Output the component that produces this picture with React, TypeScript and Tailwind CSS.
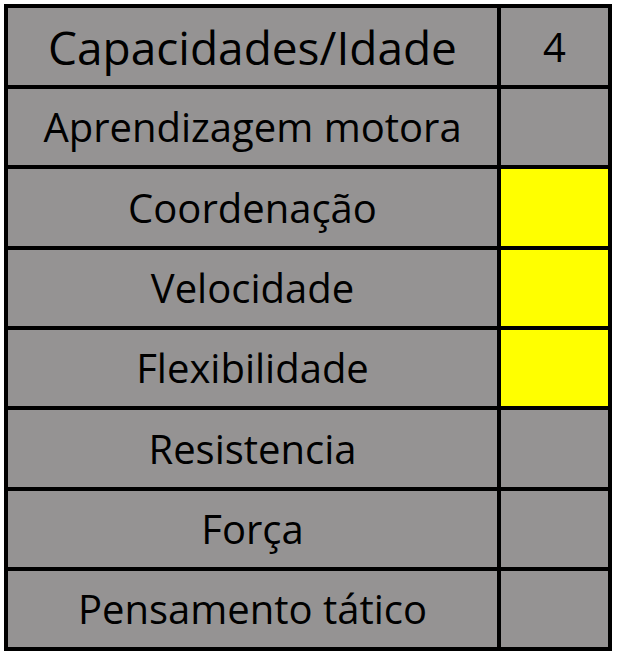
import React from 'react';

const rows = [
  { label: 'Capacidades/Idade', value: '4', h: 'h-[81px]', big: true, yellow: false },
  { label: 'Aprendizagem motora', value: '', h: 'h-[80px]', big: false, yellow: false },
  { label: 'Coordenação', value: '', h: 'h-[81px]', big: false, yellow: true },
  { label: 'Velocidade', value: '', h: 'h-[80px]', big: false, yellow: true },
  { label: 'Flexibilidade', value: '', h: 'h-[80px]', big: false, yellow: true },
  { label: 'Resistencia', value: '', h: 'h-[81px]', big: false, yellow: false },
  { label: 'Força', value: '', h: 'h-[80px]', big: false, yellow: false },
  { label: 'Pensamento tático', value: '', h: 'h-[80px]', big: false, yellow: false },
];

export default function App() {
  return (
    <div className="w-[617px] h-[656px] bg-white p-[4px] font-['Open_Sans',sans-serif] text-black">
      <div className="w-[608px] border-l-4 border-t-4 border-black">
        {rows.map((row, idx) => (
          <div key={idx} className="flex">
            <div
              className={`w-[493px] ${row.h} border-r-4 border-b-4 border-black bg-[#959393] flex items-center justify-center leading-none ${row.big ? 'text-[46px]' : 'text-[40px]'}`}
            >
              {row.label}
            </div>
            <div
              className={`w-[111px] ${row.h} border-r-4 border-b-4 border-black flex items-center justify-center leading-none text-[40px] ${row.yellow ? 'bg-[#ffff00]' : 'bg-[#959393]'}`}
            >
              {row.value}
            </div>
          </div>
        ))}
      </div>
    </div>
  );
}
